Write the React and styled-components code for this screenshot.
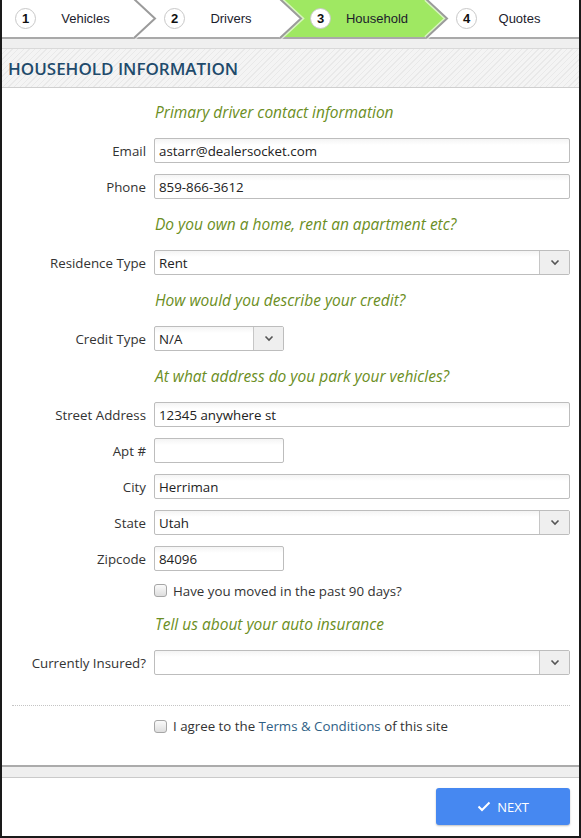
import React from 'react';
import styled, { createGlobalStyle } from 'styled-components';

const GlobalStyle = createGlobalStyle`
  html, body {
    margin: 0;
    padding: 0;
    background: #fff;
  }
  * {
    box-sizing: border-box;
  }
`;

const Page = styled.div`
  width: 581px;
  min-height: 838px;
  border: 2px solid #1a1a1a;
  border-top: none;
  display: flex;
  flex-direction: column;
  font-family: "Open Sans", "Liberation Sans", sans-serif;
  color: #333;
`;

const StepBar = styled.div`
  display: flex;
  height: 39px;
  background: #fff;
  border-bottom: 2px solid #a9a9a9;
  font-family: "Liberation Sans", Arial, sans-serif;
`;

const StepItem = styled.div`
  position: relative;
  width: 146px;
  flex: ${p => (p.$last ? '1' : 'none')};
  display: flex;
  align-items: center;
  padding-left: ${p => (p.$first ? '13px' : '16px')};
  padding-right: ${p => (p.$first ? '13px' : '17px')};
`;

const StepShape = styled.svg`
  position: absolute;
  top: 0;
  left: -14px;
  width: 167px;
  height: 37px;
  overflow: visible;
  z-index: ${p => (p.$stroke ? 2 : 0)};
  pointer-events: none;
`;

const StepNumber = styled.span`
  position: relative;
  z-index: 1;
  width: 21px;
  height: 21px;
  border-radius: 50%;
  border: 1px solid #c8c8c8;
  background: #fff;
  display: flex;
  align-items: center;
  justify-content: center;
  font-size: 13px;
  font-weight: bold;
  color: #111;
  flex: none;
`;

const StepLabel = styled.span`
  position: relative;
  z-index: 1;
  flex: 1;
  text-align: center;
  font-size: 13px;
  color: #1c1c2c;
`;

const Band = styled.div`
  height: 9px;
  background: #efefef;
`;

const Header = styled.div`
  height: 40px;
  border-top: 1px solid #d9d9d9;
  border-bottom: 1px solid #cfcfcf;
  background-color: #f1f1f1;
  background-image: repeating-linear-gradient(
    135deg,
    #f4f4f4 0px,
    #f4f4f4 3px,
    #e9e9e9 3px,
    #e9e9e9 4px
  );
  display: flex;
  align-items: center;
  padding-left: 6px;
`;

const Title = styled.h1`
  margin: 0;
  font-size: 17px;
  font-weight: 600;
  color: #1f4b6c;
`;

const Form = styled.div`
  display: grid;
  grid-template-columns: 144px 1fr;
  column-gap: 8px;
  row-gap: 11px;
  padding: 10px 9px 0 0;
  align-items: center;
`;

const SectionHeading = styled.div`
  grid-column: 2;
  height: 29px;
  line-height: 29px;
  font-size: 15.5px;
  font-style: italic;
  color: #6b8e23;
  padding-left: 1px;
`;

const Label = styled.label`
  text-align: right;
  font-size: 13.3px;
  color: #333;
`;

const Input = styled.div`
  height: 25px;
  width: ${p => (p.$short ? '130px' : '100%')};
  border: 1px solid #bdbdbd;
  border-radius: 2px;
  background: linear-gradient(#f4f4f4, #fff 6px);
  display: flex;
  align-items: center;
  padding-left: 4px;
  font-size: 13.3px;
  color: #222;
  overflow: hidden;
`;

const SelectBox = styled.div`
  height: 25px;
  width: ${p => (p.$short ? '130px' : '100%')};
  border: 1px solid #bdbdbd;
  border-radius: 2px;
  background: linear-gradient(#f4f4f4, #fff 6px);
  display: flex;
  align-items: stretch;
  font-size: 13.3px;
  color: #222;
`;

const SelectValue = styled.span`
  flex: 1;
  display: flex;
  align-items: center;
  padding-left: 4px;
`;

const SelectButton = styled.span`
  width: 30px;
  border-left: 1px solid #c6c6c6;
  background: #efefef;
  display: flex;
  align-items: center;
  justify-content: center;
`;

const CheckRow = styled.div`
  grid-column: 2;
  display: flex;
  align-items: center;
  gap: 6px;
  height: 17px;
  font-size: 13.3px;
  color: #333;
`;

const CheckBox = styled.span`
  width: 13px;
  height: 13px;
  border: 1px solid #a6a6a6;
  border-radius: 3px;
  background: linear-gradient(#fafafa, #dedede);
  flex: none;
`;

const Divider = styled.div`
  margin: 30px 9px 0 10px;
  border-top: 1px dotted #c4c4c4;
`;

const AgreeRow = styled.div`
  display: flex;
  align-items: center;
  gap: 6px;
  height: 18px;
  margin: 11px 0 30px 152px;
  font-size: 13.3px;
  color: #333;
`;

const TermsLink = styled.a`
  color: #2f5f86;
  text-decoration: none;
`;

const FooterBand = styled.div`
  height: 13px;
  border-top: 2px solid #ababab;
  border-bottom: 1px solid #cacaca;
  background: #efefef;
`;

const Footer = styled.div`
  flex: 1;
  display: flex;
  justify-content: flex-end;
  align-items: flex-start;
  padding: 10px 9px 0 0;
`;

const NextButton = styled.button`
  width: 134px;
  height: 37px;
  border: none;
  border-radius: 3px;
  background: #4688f1;
  box-shadow: 0 1px 2px rgba(0, 0, 0, 0.25);
  color: #fff;
  font-family: "Open Sans", "Liberation Sans", sans-serif;
  font-size: 13px;
  display: flex;
  align-items: center;
  justify-content: center;
  gap: 6px;
  padding: 0;
`;

const steps = ['Vehicles', 'Drivers', 'Household', 'Quotes'];
const ACTIVE = 2;

function Step({ index, label }) {
  const first = index === 0;
  const last = index === steps.length - 1;
  const active = index === ACTIVE;
  return (
    <StepItem $first={first} $last={last}>
      {active && (
        <StepShape viewBox="0 0 167 37">
          <polygon points="0,0 21,18.5 0,37 146,37 167,18.5 146,0" fill="#9fe862" />
        </StepShape>
      )}
      {!last && (
        <StepShape viewBox="0 0 167 37" $stroke>
          <polyline points="146,-1 167,18.5 146,38" fill="none" stroke="#fff" strokeWidth="5" opacity="0.6" />
          <polyline points="146,-1 167,18.5 146,38" fill="none" stroke="#9b9b9b" strokeWidth="2" />
        </StepShape>
      )}
      <StepNumber>{index + 1}</StepNumber>
      <StepLabel>{label}</StepLabel>
    </StepItem>
  );
}

function Chevron() {
  return (
    <svg width="10" height="7" viewBox="0 0 10 7">
      <polyline points="1.5,1.5 5,5 8.5,1.5" fill="none" stroke="#555" strokeWidth="1.6" />
    </svg>
  );
}

function Select({ value, short }) {
  return (
    <SelectBox $short={short}>
      <SelectValue>{value}</SelectValue>
      <SelectButton>
        <Chevron />
      </SelectButton>
    </SelectBox>
  );
}

function Field({ label, children }) {
  return (
    <>
      <Label>{label}</Label>
      {children}
    </>
  );
}

export default function App() {
  return (
    <>
      <GlobalStyle />
      <Page>
        <StepBar>
          {steps.map((s, i) => (
            <Step key={s} index={i} label={s} />
          ))}
        </StepBar>
        <Band />
        <Header>
          <Title>HOUSEHOLD INFORMATION</Title>
        </Header>

        <Form>
          <SectionHeading>Primary driver contact information</SectionHeading>
          <Field label="Email">
            <Input>astarr@dealersocket.com</Input>
          </Field>
          <Field label="Phone">
            <Input>859-866-3612</Input>
          </Field>

          <SectionHeading>Do you own a home, rent an apartment etc?</SectionHeading>
          <Field label="Residence Type">
            <Select value="Rent" />
          </Field>

          <SectionHeading>How would you describe your credit?</SectionHeading>
          <Field label="Credit Type">
            <Select value="N/A" short />
          </Field>

          <SectionHeading>At what address do you park your vehicles?</SectionHeading>
          <Field label="Street Address">
            <Input>12345 anywhere st</Input>
          </Field>
          <Field label="Apt #">
            <Input $short />
          </Field>
          <Field label="City">
            <Input>Herriman</Input>
          </Field>
          <Field label="State">
            <Select value="Utah" />
          </Field>
          <Field label="Zipcode">
            <Input $short>84096</Input>
          </Field>
          <CheckRow>
            <CheckBox />
            Have you moved in the past 90 days?
          </CheckRow>

          <SectionHeading>Tell us about your auto insurance</SectionHeading>
          <Field label="Currently Insured?">
            <Select value="" />
          </Field>
        </Form>

        <Divider />
        <AgreeRow>
          <CheckBox />
          <span>
            I agree to the <TermsLink>Terms &amp; Conditions</TermsLink> of this site
          </span>
        </AgreeRow>

        <FooterBand />
        <Footer>
          <NextButton>
            <svg width="14" height="11" viewBox="0 0 14 11">
              <polyline points="1.5,5.5 5,9 12.5,1.5" fill="none" stroke="#fff" strokeWidth="2" />
            </svg>
            NEXT
          </NextButton>
        </Footer>
      </Page>
    </>
  );
}
